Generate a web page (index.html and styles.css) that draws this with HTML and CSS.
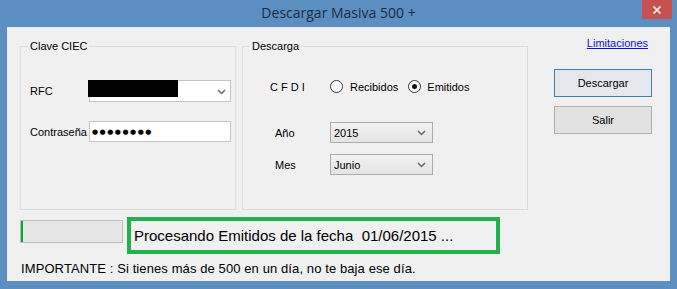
FILE: index.html
```html
<!DOCTYPE html>
<html lang="es">
<head>
    <meta charset="UTF-8">
    <title>Descargar Masiva 500 +</title>
    <link rel="stylesheet" href="styles.css">
</head>
<body>

<div class="titlebar">
    <span></span>
    <span class="title">Descargar Masiva 500 +</span>
    <span class="close">
        <svg width="10" height="10" viewBox="0 0 10 10"><path d="M1.5 1.5 L8.5 8.5 M8.5 1.5 L1.5 8.5" stroke="#fff" stroke-width="1.6"/></svg>
    </span>
</div>

<div class="client">
    <div class="top">
        <fieldset class="group clave">
            <legend>Clave CIEC</legend>
            <div class="rows">
                <label>RFC</label>
                <div class="combo edit">
                    <span class="hidden-rfc"></span>
                    <svg class="chev" width="9" height="6" viewBox="0 0 9 6"><polyline points="1,1 4.5,4.5 8,1" fill="none" stroke="#666" stroke-width="1.5"/></svg>
                </div>
                <label>Contraseña</label>
                <div class="textbox"><span class="dots">●●●●●●●●</span></div>
            </div>
        </fieldset>

        <fieldset class="group descarga">
            <legend>Descarga</legend>
            <div class="rows">
                <span class="cfdi">C F D I</span>
                <div class="radios">
                    <span class="radio"></span><span class="radio-text">Recibidos</span>
                    <span class="radio checked"></span><span class="radio-text">Emitidos</span>
                </div>
                <label class="small first">Año</label>
                <div class="combo list first">
                    <span>2015</span>
                    <svg class="chev" width="9" height="6" viewBox="0 0 9 6"><polyline points="1,1 4.5,4.5 8,1" fill="none" stroke="#666" stroke-width="1.5"/></svg>
                </div>
                <label class="small">Mes</label>
                <div class="combo list">
                    <span>Junio</span>
                    <svg class="chev" width="9" height="6" viewBox="0 0 9 6"><polyline points="1,1 4.5,4.5 8,1" fill="none" stroke="#666" stroke-width="1.5"/></svg>
                </div>
            </div>
        </fieldset>

        <div class="actions">
            <a href="#" class="link">Limitaciones</a>
            <button class="btn default">Descargar</button>
            <button class="btn">Salir</button>
        </div>
    </div>

    <div class="status">
        <div class="progress"><span class="fill"></span></div>
        <div class="message">Procesando Emitidos de la fecha&nbsp; 01/06/2015 ...</div>
    </div>

    <p class="note">IMPORTANTE : Si tienes más de 500 en un día, no te baja ese día.</p>
</div>

</body>
</html>
```

FILE: styles.css
```css
body {
    margin: 0;
    width: 677px;
    height: 289px;
    overflow: hidden;
    background-color: #5b8fc2;
    font-family: "Liberation Sans", Arial, sans-serif;
    font-size: 11px;
    color: #000;
}
.titlebar {
    height: 27px;
    display: grid;
    grid-template-columns: 1fr auto 1fr;
    align-items: start;
}
.title {
    font-family: "Open Sans", "Liberation Sans", sans-serif;
    font-size: 14px;
    line-height: 26px;
    color: #1b2a3a;
}
.close {
    justify-self: end;
    margin-right: 5px;
    width: 30px;
    height: 19px;
    background-color: #c75050;
    display: flex;
    align-items: center;
    justify-content: center;
}
.close svg {
    display: block;
}
.client {
    margin: 0 7px;
    height: 254px;
    box-sizing: border-box;
    padding: 13px 0 0 13px;
    background-color: #f0f0f0;
}
.top {
    display: flex;
    align-items: flex-start;
}
.group {
    margin: 0;
    padding: 0;
    min-width: 0;
    box-sizing: border-box;
    height: 170px;
    border: 1px solid #dcdcdc;
}
.group legend {
    margin-left: 7px;
    padding: 0 2px;
    line-height: 13px;
    color: #000;
}
.clave {
    width: 216px;
}
.clave .rows {
    display: grid;
    grid-template-columns: 59px 142px;
    row-gap: 19px;
    align-items: center;
    padding: 27px 0 0 9px;
}
.descarga {
    width: 286px;
    margin-left: 6px;
}
.descarga .rows {
    display: grid;
    grid-template-columns: 60px 103px;
    grid-template-rows: 17px auto 21px;
    row-gap: 11px;
    align-items: center;
    padding: 25px 0 0 27px;
}
.descarga .rows .small {
    margin-left: 5px;
}
.descarga .rows .first {
    margin-top: 16px;
}
.cfdi {
    white-space: pre;
}
.radios {
    display: flex;
    align-items: center;
    width: max-content;
    white-space: nowrap;
}
.radio {
    flex: none;
    width: 13px;
    height: 13px;
    box-sizing: border-box;
    border: 1px solid #333;
    border-radius: 50%;
    background-color: #fff;
    display: flex;
    align-items: center;
    justify-content: center;
}
.radio.checked::after {
    content: "";
    width: 5px;
    height: 5px;
    border-radius: 50%;
    background-color: #111;
}
.radio-text {
    margin-left: 7px;
    margin-right: 10px;
}
.radio-text:last-child {
    margin-left: 6px;
}
.combo {
    height: 21px;
    box-sizing: border-box;
    border: 1px solid #acacac;
    display: flex;
    align-items: center;
    justify-content: space-between;
    padding: 0 6px 0 3px;
}
.combo.edit {
    height: 22px;
    background-color: #fff;
    border-color: #c4c4c4;
    align-items: flex-start;
    padding: 0 4px 0 0;
}
.combo.edit .chev {
    margin-top: 8px;
}
.combo.list {
    background: linear-gradient(#f2f2f2, #e4e4e4);
}
.hidden-rfc {
    width: 90px;
    height: 17px;
    margin: -1px 0 0 -2px;
    background-color: #000;
}
.textbox {
    height: 21px;
    box-sizing: border-box;
    border: 1px solid #c4c4c4;
    background-color: #fff;
    display: flex;
    align-items: center;
    padding-left: 2px;
}
.dots {
    font-family: "DejaVu Sans", sans-serif;
    font-size: 7px;
    letter-spacing: 1.5px;
}
.actions {
    width: 98px;
    margin-left: 26px;
    display: flex;
    flex-direction: column;
    align-items: stretch;
}
.link {
    align-self: flex-end;
    margin: -3px 4px 0 0;
    line-height: 13px;
    color: #1010d0;
    text-decoration: underline;
}
.btn {
    height: 28px;
    margin-top: 19px;
    padding: 0;
    border: 1px solid #adadad;
    background-color: #e1e1e1;
    font-family: "Liberation Sans", Arial, sans-serif;
    font-size: 11px;
    color: #000;
}
.btn.default {
    border-color: #3c7fb1;
    background-color: #e4e8ec;
}
.btn + .btn {
    margin-top: 9px;
}
.status {
    display: flex;
    align-items: flex-start;
    margin-top: 7px;
}
.progress {
    width: 103px;
    height: 23px;
    margin-top: 3px;
    box-sizing: border-box;
    border: 1px solid #bcbcbc;
    background-color: #e6e6e6;
    display: flex;
}
.progress .fill {
    width: 2px;
    background-color: #06b025;
}
.message {
    width: 373px;
    height: 37px;
    margin-left: 4px;
    box-sizing: border-box;
    border: 4px solid #22b14c;
    display: flex;
    align-items: center;
    padding-left: 3px;
    font-size: 15px;
    white-space: pre;
}
.note {
    margin: 7px 0 0 1px;
    font-size: 13px;
    line-height: 15px;
    letter-spacing: 0.1px;
}
```
